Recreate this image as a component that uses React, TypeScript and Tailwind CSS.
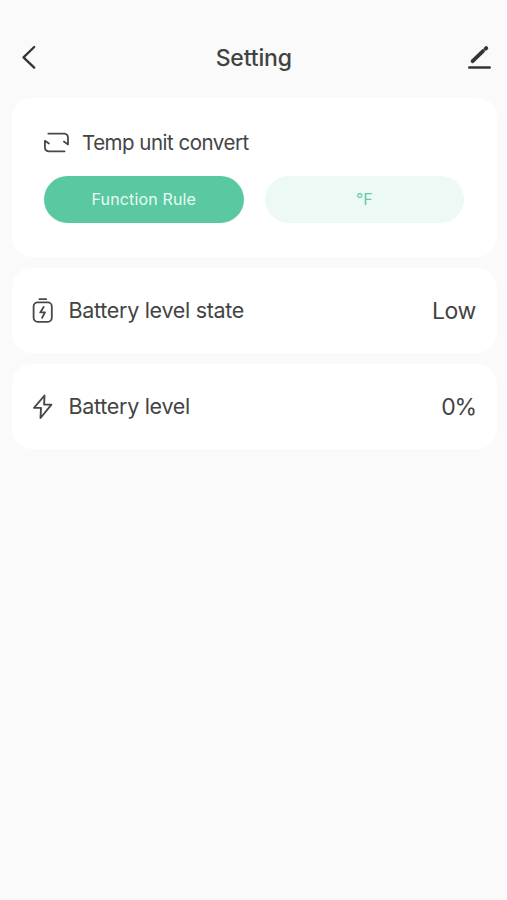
import type { ReactNode } from 'react';

function BackIcon() {
  return (
    <svg width="30" height="30" viewBox="0 0 30 30" fill="none" stroke="#343434" strokeWidth="2.3" strokeLinecap="round" strokeLinejoin="round">
      <path d="M20.2 5 9.5 15.3 20.2 25.6" />
    </svg>
  );
}

function EditIcon() {
  return (
    <svg width="30" height="30" viewBox="0 0 30 30" fill="none" stroke="#343434" strokeLinecap="round">
      <path d="M10.6 19.2 21 9.1" strokeWidth="3.8" />
      <path d="M23.7 6.6 24.2 6.1" strokeWidth="4" />
      <path d="M7.2 25.5H27.7" strokeWidth="2.4" />
    </svg>
  );
}

function ConvertIcon() {
  return (
    <svg width="26" height="22" viewBox="0 0 26 22" fill="none" stroke="#484848" strokeWidth="1.8" strokeLinecap="round" strokeLinejoin="round">
      <path d="M4.3 1.6H20.3Q24 1.8 24 6V12.4L19.9 9.6" />
      <path d="M20.6 19.3H4.6Q.9 19 .9 15V8.8L4.9 11.6" />
    </svg>
  );
}

function BatteryIcon() {
  return (
    <svg width="22" height="28" viewBox="0 0 22 28" fill="none" stroke="#484848" strokeWidth="1.8" strokeLinecap="round" strokeLinejoin="round">
      <path d="M7.4 2.2H14.2" />
      <rect x="1.6" y="5.4" width="18.2" height="19.4" rx="4" />
      <path d="M11.7 10 8.2 15.4H13L10.1 20.8" />
    </svg>
  );
}

function BoltIcon() {
  return (
    <svg width="22" height="28" viewBox="0 0 22 28" fill="none" stroke="#484848" strokeWidth="1.9" strokeLinejoin="round">
      <path d="M12.5 2.5 2 14.9H9L8.5 25 19.4 11.6H12.1Z" />
    </svg>
  );
}

interface SettingRowProps {
  icon: ReactNode;
  label: string;
  value: string;
  valueClass: string;
}

function SettingRow({ icon, label, value, valueClass }: SettingRowProps) {
  return (
    <div className="flex h-[85px] items-center rounded-[20px] bg-white pl-5 pr-[21px]">
      {icon}
      <span className="ml-[14.5px] flex-1 text-[21.5px] tracking-[-0.3px]">{label}</span>
      <span className={`pt-0.5 text-[23px] ${valueClass}`}>{value}</span>
    </div>
  );
}

export default function App() {
  return (
    <div className="h-[900px] w-full overflow-hidden bg-[#fafafa] font-['Inter',sans-serif] text-[#444444]">
      {/* Header */}
      <header className="flex h-[98px] items-start justify-between pl-[14px] pr-[15px] pt-[42px]">
        <button aria-label="Back">
          <BackIcon />
        </button>
        <h1 className="pl-[1.5px] text-[23px] font-medium leading-8 tracking-[-0.15px] text-[#424242]">Setting</h1>
        <button aria-label="Edit">
          <EditIcon />
        </button>
      </header>

      <main className="flex flex-col gap-[11px] pl-3 pr-[10px]">
        <section className="h-[159px] rounded-[20px] bg-white pl-8 pr-[33px] pt-[29px]">
          <div className="flex h-8 items-center gap-3">
            <ConvertIcon />
            <h2 className="pt-px text-[20.5px] tracking-[-0.5px]">Temp unit convert</h2>
          </div>
          <div className="mt-[17px] flex gap-[21px]">
            <button className="h-[46.5px] flex-1 rounded-full bg-[#5ac8a0] text-base tracking-[0.15px] text-[#e8fbf4]">
              Function Rule
            </button>
            <button className="h-[46.5px] flex-1 rounded-full bg-[#edf9f5] text-base text-[#68c9a5]">
              °F
            </button>
          </div>
        </section>

        <SettingRow icon={<BatteryIcon />} label="Battery level state" value="Low" valueClass="tracking-[-0.4px]" />
        <SettingRow icon={<BoltIcon />} label="Battery level" value="0%" valueClass="tracking-[-1.2px]" />
      </main>
    </div>
  );
}
